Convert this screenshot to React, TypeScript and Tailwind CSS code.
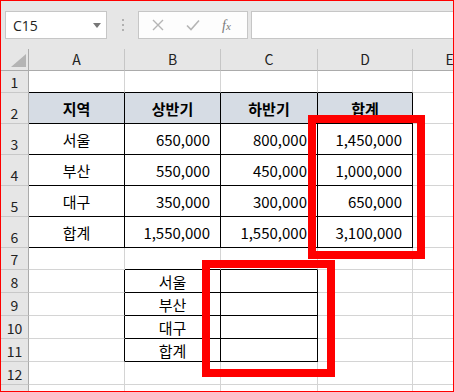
import React from 'react';

const font = { fontFamily: '"Noto Sans CJK KR", "Noto Sans", sans-serif' };

const table = [
  ['지역', '상반기', '하반기', '합계'],
  ['서울', '650,000', '800,000', '1,450,000'],
  ['부산', '550,000', '450,000', '1,000,000'],
  ['대구', '350,000', '300,000', '650,000'],
  ['합계', '1,550,000', '1,550,000', '3,100,000'],
];

const lookup = ['서울', '부산', '대구', '합계'];

const GRAY = 'border-[#d4d4d4]';

function Cell({
  children,
  className = '',
  r = false,
  b = false,
}: {
  children?: React.ReactNode;
  className?: string;
  r?: boolean;
  b?: boolean;
}) {
  return (
    <div
      className={`flex items-center overflow-hidden whitespace-nowrap border-r border-b ${GRAY} ${
        r ? 'border-r-black' : ''
      } ${b ? 'border-b-black' : ''} ${className}`}
    >
      {children}
    </div>
  );
}

function RowHead({ n }: { n: number }) {
  return (
    <div className="flex items-end justify-center border-r border-b border-r-[#ababab] border-b-[#c8c8c8] bg-[#e6e6e6] pb-[2px] text-[14px] leading-[16px] text-[#222]">
      {n}
    </div>
  );
}

function FormulaBar() {
  return (
    <div className="flex h-[48px] shrink-0 items-start bg-[#e6e6e6] pt-[10px] pl-[4px]">
      {/* Name box */}
      <div className="flex h-[28px] w-[102px] items-center justify-between border border-[#c6c6c6] bg-white pr-[5px] pl-[7px]">
        <span className="text-[14px] text-[#222]" style={{ fontFamily: '"Open Sans", sans-serif' }}>
          C15
        </span>
        <svg width="8" height="5" viewBox="0 0 8 5">
          <path d="M0 0h8L4 5z" fill="#777" />
        </svg>
      </div>
      {/* grip dots */}
      <div className="flex w-[31px] flex-col items-center gap-[3px] pt-[8px]">
        <span className="h-[2px] w-[2px] bg-[#b0b0b0]" />
        <span className="h-[2px] w-[2px] bg-[#b0b0b0]" />
        <span className="h-[2px] w-[2px] bg-[#b0b0b0]" />
      </div>
      {/* cancel / enter / fx */}
      <div className="flex h-[28px] w-[110px] items-center border border-[#c6c6c6] bg-[#fdfdfd] pl-[13px]">
        <svg width="12" height="12" viewBox="0 0 12 12" className="mr-[22px]">
          <path d="M1 1l10 10M11 1L1 11" stroke="#b5b5b5" strokeWidth="1.4" />
        </svg>
        <svg width="14" height="12" viewBox="0 0 14 12" className="mr-[22px]">
          <path d="M1 6.5l4 4L13 1.5" stroke="#b5b5b5" strokeWidth="1.6" fill="none" />
        </svg>
        <span className="text-[14px] italic text-[#7a7a7a]" style={{ fontFamily: '"Liberation Serif", serif' }}>
          f<span className="text-[11px]">x</span>
        </span>
      </div>
      <div className="ml-[3px] h-[28px] flex-1 border border-r-0 border-[#c6c6c6] bg-white" />
    </div>
  );
}

export default function App() {
  const rows: React.ReactNode[] = [];

  // row 1
  rows.push(
    <React.Fragment key="r1">
      <RowHead n={1} />
      {[0, 1, 2, 3].map((c) => (
        <Cell key={c} b />
      ))}
      <Cell />
    </React.Fragment>
  );

  // rows 2-6 : main table
  table.forEach((line, i) => {
    const head = i === 0;
    rows.push(
      <React.Fragment key={`t${i}`}>
        <RowHead n={i + 2} />
        {line.map((v, c) => (
          <Cell
            key={c}
            r
            b
            className={`pt-[3px] text-[15px] text-black ${head ? 'justify-center bg-[#d6dce4] font-bold' : c === 0 ? 'justify-center' : 'justify-end pr-[10px]'}`}
          >
            {v}
          </Cell>
        ))}
        <Cell />
      </React.Fragment>
    );
  });

  // row 7
  rows.push(
    <React.Fragment key="r7">
      <RowHead n={7} />
      <Cell />
      <Cell b />
      <Cell b />
      <Cell />
      <Cell />
    </React.Fragment>
  );

  // rows 8-11 : lookup table
  lookup.forEach((v, i) => {
    rows.push(
      <React.Fragment key={`l${i}`}>
        <RowHead n={i + 8} />
        <Cell r />
        <Cell r b className="justify-center pt-[2px] text-[15px] text-black">
          {v}
        </Cell>
        <Cell r b />
        <Cell />
        <Cell />
      </React.Fragment>
    );
  });

  [12, 13].forEach((n) => {
    rows.push(
      <React.Fragment key={`e${n}`}>
        <RowHead n={n} />
        <Cell />
        <Cell />
        <Cell />
        <Cell />
        <Cell />
      </React.Fragment>
    );
  });

  return (
    <div
      className="relative h-[392px] w-[454px] overflow-hidden border border-[#ff0000] bg-white"
      style={font}
    >
      <FormulaBar />

      <div className="grid w-[486px] grid-cols-[28px_96px_96px_97px_95px_74px] grid-rows-[22px_22px_31px_31px_31px_31px_31px_22px_23px_23px_23px_23px_23px_23px]">
        {/* column headers */}
        <div className="relative border-r border-b border-r-[#ababab] border-b-[#ababab] bg-[#e6e6e6]">
          <svg width="15" height="13" viewBox="0 0 15 13" className="absolute right-[2px] bottom-[3px]">
            <path d="M15 0v13H0z" fill="#b4b4b4" />
          </svg>
        </div>
        {['A', 'B', 'C', 'D', 'E'].map((l) => (
          <div
            key={l}
            className="flex items-center justify-center border-r border-b border-r-[#c6c6c6] border-b-[#ababab] bg-[#e6e6e6] text-[14px] text-[#222]"
          >
            {l}
          </div>
        ))}
        {rows}
      </div>

      {/* red highlight boxes */}
      <div className="absolute top-[114px] left-[307px] h-[144px] w-[117px] border-[8px] border-[#ff0000]" />
      <div className="absolute top-[259px] left-[201px] h-[117px] w-[133px] border-[8px] border-[#ff0000]" />
    </div>
  );
}
